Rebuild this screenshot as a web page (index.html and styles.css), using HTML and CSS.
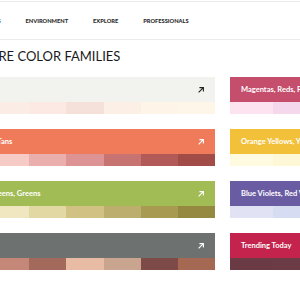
FILE: index.html
```html
<!DOCTYPE html>
<html lang="en">
<head>
  <meta charset="UTF-8" />
  <meta name="viewport" content="width=device-width, initial-scale=1.0"/>
  <title>Explore Color Families</title>
  <link rel="stylesheet" href="styles.css">
</head>
<body>

  <div class="nav">
    <ul class="nav-links">
      <li>COLORS</li>
      <li>ENVIRONMENT</li>
      <li>EXPLORE</li>
      <li>PROFESSIONALS</li>
    </ul>
  </div>

  <div class="page">
    <h1>EXPLORE COLOR FAMILIES</h1>

    <div class="families">
      <div class="card wide whites">
        <div class="card-head">
          <span>Whites</span>
          <svg class="arrow" viewBox="0 0 10 10"><path d="M2 8 L8 2 M3 2 H8 V7"/></svg>
        </div>
        <div class="swatches">
          <i style="background:#fcefe9"></i><i style="background:#fbece6"></i><i style="background:#fce9e3"></i>
          <i style="background:#f6e1da"></i><i style="background:#fcefe5"></i><i style="background:#fef4e7"></i><i style="background:#fef6e9"></i>
        </div>
      </div>

      <div class="card narrow">
        <div class="card-head" style="background:#c44e6c"><span>Magentas, Reds, Pinks</span></div>
        <div class="swatches">
          <i style="background:#fde3ef"></i><i style="background:#f6d8ec"></i><i style="background:#f2d0e6"></i>
        </div>
      </div>

      <div class="card wide">
        <div class="card-head" style="background:#ef7b5a">
          <span>Oranges, Tans</span>
          <svg class="arrow" viewBox="0 0 10 10"><path d="M2 8 L8 2 M3 2 H8 V7"/></svg>
        </div>
        <div class="swatches">
          <i style="background:#f9d6cf"></i><i style="background:#f6cbc6"></i><i style="background:#eaafac"></i>
          <i style="background:#dd9394"></i><i style="background:#c77372"></i><i style="background:#b15a58"></i><i style="background:#a24c48"></i>
        </div>
      </div>

      <div class="card narrow">
        <div class="card-head" style="background:#f2c039"><span>Orange Yellows, Yellows</span></div>
        <div class="swatches">
          <i style="background:#fefbe0"></i><i style="background:#fef8d6"></i><i style="background:#fdf2c4"></i>
        </div>
      </div>

      <div class="card wide">
        <div class="card-head" style="background:#a1bc55">
          <span>Yellow Greens, Greens</span>
          <svg class="arrow" viewBox="0 0 10 10"><path d="M2 8 L8 2 M3 2 H8 V7"/></svg>
        </div>
        <div class="swatches">
          <i style="background:#f6eecf"></i><i style="background:#f0e6c0"></i><i style="background:#e2d8a4"></i>
          <i style="background:#d1c284"></i><i style="background:#bcaf6e"></i><i style="background:#a89a50"></i><i style="background:#958840"></i>
        </div>
      </div>

      <div class="card narrow">
        <div class="card-head" style="background:#6a5ca3"><span>Blue Violets, Red Violets</span></div>
        <div class="swatches">
          <i style="background:#e2e2f5"></i><i style="background:#d6dcf2"></i><i style="background:#cfd6ee"></i>
        </div>
      </div>

      <div class="card wide">
        <div class="card-head" style="background:#6d7270">
          <span>Neutrals</span>
          <svg class="arrow" viewBox="0 0 10 10"><path d="M2 8 L8 2 M3 2 H8 V7"/></svg>
        </div>
        <div class="swatches">
          <i style="background:#d59a88"></i><i style="background:#c58878"></i><i style="background:#a36a5c"></i>
          <i style="background:#e8bba5"></i><i style="background:#c9a590"></i><i style="background:#7e4a48"></i><i style="background:#a56853"></i>
        </div>
      </div>

      <div class="card narrow">
        <div class="card-head" style="background:#c3234c"><span>Trending Today</span></div>
        <div class="swatches">
          <i style="background:#6a3a45"></i><i style="background:#6c3c46"></i><i style="background:#6e3e48"></i>
        </div>
      </div>
    </div>
  </div>

</body>
</html>
```

FILE: styles.css
```css
body {
  margin: 0;
  font-family: Lato, "Open Sans", sans-serif;
  background-color: #ffffff;
  color: #222;
  overflow: hidden;
}

.nav {
  margin-top: 1px;
  height: 37px;
  border-top: 1px solid #ebebeb;
  border-bottom: 1px solid #ececec;
  display: flex;
  align-items: center;
}

.nav-links {
  list-style: none;
  margin: 0 0 0 -22px;
  padding: 0;
  display: flex;
  gap: 25px;
  font-size: 5.7px;
  font-weight: 900;
  color: #2a2a2a;
}

.page {
  margin-left: -45px;
}

h1 {
  margin: 8px 0 0 3px;
  font-size: 13px;
  line-height: 17px;
  font-weight: 400;
  color: #1a1a1a;
}

.families {
  margin-top: 12px;
  display: grid;
  grid-template-columns: 260px 130px;
  column-gap: 15px;
  row-gap: 15px;
}

.card-head {
  height: 25px;
  padding: 0 10px 0 11px;
  display: flex;
  align-items: center;
  justify-content: space-between;
  color: #fff;
  font-size: 7.5px;
  font-weight: 700;
  white-space: nowrap;
}

.whites .card-head {
  background-color: #f2f3ef;
  color: #333;
}

.whites .arrow {
  stroke: #222;
}

.arrow {
  width: 8px;
  height: 8px;
  fill: none;
  stroke: #fff;
  stroke-width: 1.4;
}

.swatches {
  height: 12px;
  display: flex;
}

.swatches i {
  flex: 1;
}
```
